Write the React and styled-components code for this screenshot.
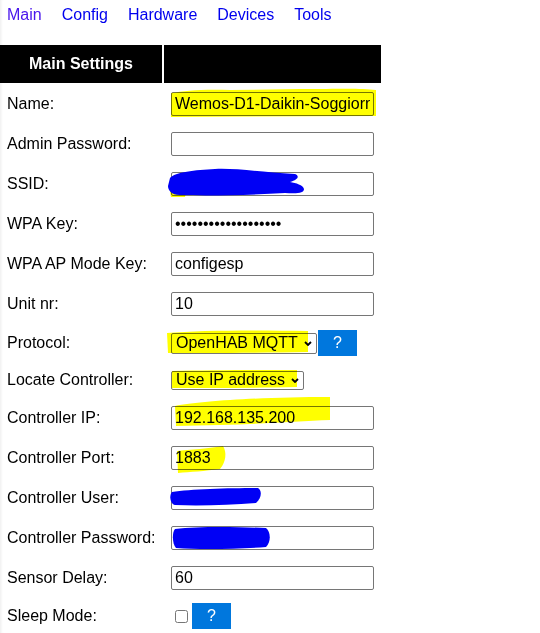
import React from 'react';
import styled, { createGlobalStyle } from 'styled-components';

const Global = createGlobalStyle`
  html, body { margin: 0; padding: 0; background: #fff; }
  body {
    font-family: "Liberation Sans", Arial, sans-serif;
    font-size: 16px;
    color: #000;
  }
`;

const Page = styled.div`
  position: relative;
  width: 540px;
  height: 633px;
  overflow: hidden;
  box-shadow: inset 3px 0 3px -2px rgba(0, 0, 0, 0.08);
`;

const Nav = styled.nav`
  display: flex;
  gap: 20px;
  height: 45px;
  box-sizing: border-box;
  padding: 6px 0 0 7px;
  line-height: 18px;
`;

const NavLink = styled.a`
  color: ${(p) => (p.$visited ? '#4a17ec' : '#0000ee')};
  text-decoration: none;
  font-size: 16px;
`;

const Form = styled.div`
  display: grid;
  grid-template-columns: 162px 217px;
  gap: 2px;
`;

const HeadCell = styled.div`
  background: #000;
  color: #fff;
  font-weight: bold;
  height: 38px;
  display: flex;
  align-items: center;
  justify-content: center;
`;

const Cell = styled.div`
  height: ${(p) => p.$h || 38}px;
  display: flex;
  align-items: center;
  padding: 0 7px;
  box-sizing: border-box;
  white-space: nowrap;
`;

const TextInput = styled.input`
  width: 203px;
  height: 24px;
  box-sizing: border-box;
  border: 1px solid #767676;
  border-radius: 2px;
  padding: 0 3px;
  margin: 0;
  font: 16px "Liberation Sans", Arial, sans-serif;
  color: #000;
  background: #fff;
  outline: none;
`;

const SelectWrap = styled.span`
  position: relative;
  display: inline-flex;
`;

const Select = styled.select`
  appearance: none;
  -webkit-appearance: none;
  width: ${(p) => p.$w}px;
  height: ${(p) => p.$hh}px;
  box-sizing: border-box;
  border: 1px solid #767676;
  border-radius: 2px;
  padding: 0 0 0 4px;
  margin: 0;
  font: 16px "Liberation Sans", Arial, sans-serif;
  color: #000;
  background: #fff;
  line-height: 1;
`;

const Chevron = styled.svg`
  position: absolute;
  right: 5px;
  top: 50%;
  margin-top: -2px;
  pointer-events: none;
`;

const HelpButton = styled.button`
  width: 39px;
  height: 26px;
  margin: 0 0 0 1px;
  padding: 0;
  border: none;
  background: #0077dd;
  color: #fff;
  font: 16px "Liberation Sans", Arial, sans-serif;
`;

const Check = styled.input`
  width: 13px;
  height: 13px;
  margin: 3px 3px 3px 4px;
`;

const Overlay = styled.svg`
  position: absolute;
  left: 0;
  top: 0;
  pointer-events: none;
`;

const Highlight = styled.g`
  mix-blend-mode: multiply;
`;

const fields = [
  { label: 'Name:', value: 'Wemos-D1-Daikin-Soggiorno' },
  { label: 'Admin Password:', value: '', type: 'password' },
  { label: 'SSID:', value: '' },
  { label: 'WPA Key:', value: '1234567890123456789', type: 'password' },
  { label: 'WPA AP Mode Key:', value: 'configesp' },
  { label: 'Unit nr:', value: '10' },
];

const fields2 = [
  { label: 'Controller IP:', value: '192.168.135.200' },
  { label: 'Controller Port:', value: '1883' },
  { label: 'Controller User:', value: '' },
  { label: 'Controller Password:', value: '' },
  { label: 'Sensor Delay:', value: '60' },
];

const ChevronIcon = () => (
  <Chevron width="8" height="5" viewBox="0 0 8 5">
    <path d="M1 1 L4 4 L7 1" fill="none" stroke="#000" strokeWidth="1.8" />
  </Chevron>
);

const FieldRow = ({ label, value, type }) => (
  <>
    <Cell>{label}</Cell>
    <Cell>
      <TextInput type={type || 'text'} defaultValue={value} readOnly />
    </Cell>
  </>
);

export default function App() {
  return (
    <Page>
      <Global />
      <Nav>
        <NavLink href="#" $visited>Main</NavLink>
        <NavLink href="#">Config</NavLink>
        <NavLink href="#">Hardware</NavLink>
        <NavLink href="#">Devices</NavLink>
        <NavLink href="#">Tools</NavLink>
      </Nav>
      <Form>
        <HeadCell>Main Settings</HeadCell>
        <HeadCell />
        {fields.map((f) => (
          <FieldRow key={f.label} {...f} />
        ))}
        <Cell $h={36}>Protocol:</Cell>
        <Cell $h={36}>
          <SelectWrap>
            <Select $w={146} $hh={21} defaultValue="ohm">
              <option value="ohm">OpenHAB MQTT</option>
            </Select>
            <ChevronIcon />
          </SelectWrap>
          <HelpButton>?</HelpButton>
        </Cell>
        <Cell $h={34}>Locate Controller:</Cell>
        <Cell $h={34}>
          <SelectWrap>
            <Select $w={133} $hh={19} defaultValue="ip">
              <option value="ip">Use IP address</option>
            </Select>
            <ChevronIcon />
          </SelectWrap>
        </Cell>
        {fields2.map((f) => (
          <FieldRow key={f.label} {...f} />
        ))}
        <Cell $h={34}>Sleep Mode:</Cell>
        <Cell $h={34}>
          <Check type="checkbox" readOnly />
          <HelpButton>?</HelpButton>
        </Cell>
      </Form>
      <Overlay width="540" height="633" viewBox="0 0 540 633">
        <Highlight fill="#ffff00">
          <path d="M171,93 C185,91 200,89 230,90 L300,89 C340,89 360,88 376,90 L376,116 L171,117 Z" />
          <path d="M170,191 L186,192 L185,197 L171,197 Z" />
          <path d="M167,333 C200,330 260,330 308,331 L308,352 C260,353 200,353 168,353 Z" />
          <path d="M172,371 C210,370 260,370 297,370 L297,387 C250,388 210,388 172,388 Z" />
          <path d="M175,406 C200,401 260,397 330,397 L330,420 C300,421 260,424 220,425 L176,426 Z" />
          <path d="M177,451 C188,450 212,448 223,446 C227,452 226,462 220,469 C205,471 190,472 178,473 Z" />
        </Highlight>
        <g fill="#0000f5">
          <path d="M170,178 C175,172 195,170 215,169 C235,168 260,172 295,174 C300,176 298,180 290,182 C296,183 303,185 304,189 C304,193 298,194 285,193 C250,195 210,196 180,195 C171,195 168,190 168,186 Z" />
          <path d="M172,492 C190,489 230,488 258,488 C262,490 262,498 256,503 C230,505 200,506 175,505 C170,504 169,495 172,492 Z" />
          <path d="M175,529 C200,526 240,527 266,528 C271,532 271,542 266,547 C240,549 200,550 176,548 C172,544 172,532 175,529 Z" />
        </g>
      </Overlay>
    </Page>
  );
}
